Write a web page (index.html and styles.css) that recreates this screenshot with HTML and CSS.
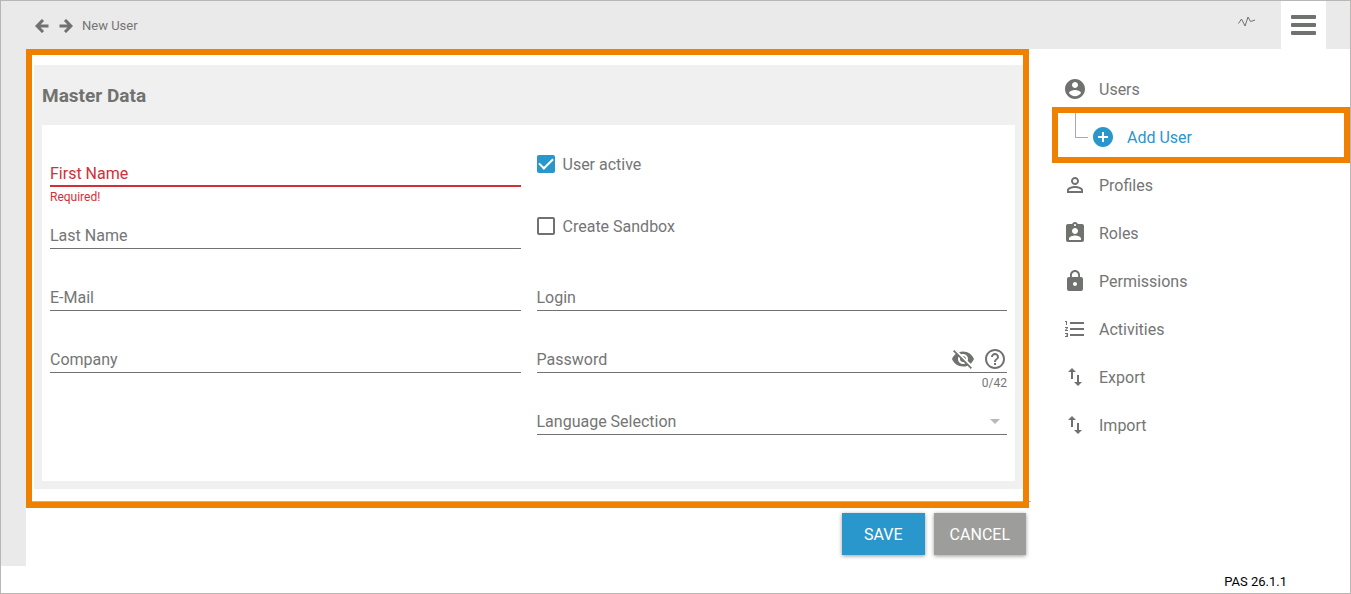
FILE: index.html
```html
<!DOCTYPE html>
<html lang="en">
<head>
<meta charset="utf-8">
<meta name="viewport" content="width=device-width, initial-scale=1">
<title>New User</title>
<link rel="stylesheet" href="styles.css">
</head>
<body class="app">
<header class="topbar">
  <button class="icon-button" type="button" aria-label="Back"><svg width="14" height="14" viewBox="0 0 14 14"><path d="M8 1 2 7l6 6M2.500 7H13.500" fill="none" stroke="currentColor" stroke-width="3"/></svg></button>
  <button class="icon-button forward" type="button" aria-label="Forward"><svg width="14" height="14" viewBox="0 0 14 14"><path d="M6 1 12 7l-6 6M11.500 7H.5" fill="none" stroke="currentColor" stroke-width="3"/></svg></button>
  <span class="crumb">New User</span>
  <button class="icon-button pulse" type="button" aria-label="Activity"><svg width="18" height="12" viewBox="0 0 18 12"><path d="M.5 7.500 3.500 3 7 10 10 1l2.500 4.500L17 4" fill="none" stroke="currentColor" stroke-width="1"/></svg></button>
  <button class="menu-button" type="button" aria-label="Menu"><svg width="25" height="22" viewBox="0 0 25 22"><g fill="currentColor"><rect width="25" height="4" y="1" rx="1"/><rect width="25" height="4" y="9" rx="1"/><rect width="25" height="4" y="17" rx="1"/></g></svg></button>
</header>
<div class="workspace">
  <div class="rail"></div>
  <main class="content">
    <form class="user-form">
      <div class="highlight">
        <section class="panel">
          <h1 class="panel-title">Master Data</h1>
          <div class="fields">
            <div class="field invalid">
              <label for="first">First Name</label>
              <input id="first" type="text" aria-describedby="first-hint">
              <span class="hint" id="first-hint">Required!</span>
            </div>
            <div class="check"><input id="active" type="checkbox" checked><label for="active">User active</label></div>
            <div class="field"><label for="last">Last Name</label><input id="last" type="text"></div>
            <div class="check"><input id="sandbox" type="checkbox"><label for="sandbox">Create Sandbox</label></div>
            <div class="field"><label for="mail">E-Mail</label><input id="mail" type="email"></div>
            <div class="field"><label for="login">Login</label><input id="login" type="text"></div>
            <div class="field"><label for="company">Company</label><input id="company" type="text"></div>
            <div class="field">
              <label for="password">Password</label>
              <input id="password" type="password" maxlength="42">
              <div class="field-icons">
                <button class="icon-button" type="button" aria-label="Show password"><svg width="24" height="24" viewBox="0 0 24 24"><path fill="currentColor" d="M12 7c2.760 0 5 2.240 5 5 0 .650-.130 1.260-.360 1.830l2.920 2.920c1.510-1.260 2.700-2.890 3.430-4.750-1.730-4.390-6-7.500-11-7.500-1.400 0-2.740.250-3.980.700l2.160 2.160C10.740 7.130 11.350 7 12 7zM2 4.270l2.280 2.280.460.460C3.080 8.300 1.780 10.020 1 12c1.730 4.390 6 7.500 11 7.500 1.550 0 3.030-.300 4.380-.840l.420.420L19.730 22 21 20.730 3.270 3 2 4.270zM7.530 9.800l1.550 1.550c-.050.210-.080.430-.080.650 0 1.660 1.340 3 3 3 .220 0 .440-.030.650-.080l1.550 1.550c-.670.330-1.410.530-2.200.530-2.760 0-5-2.240-5-5 0-.790.200-1.530.530-2.200zm4.310-.780 3.150 3.150.020-.160c0-1.660-1.340-3-3-3l-.170.010z"/></svg></button>
                <button class="icon-button" type="button" aria-label="Password help"><svg width="24" height="24" viewBox="0 0 24 24"><path fill="currentColor" d="M11 18h2v-2h-2v2zm1-16C6.480 2 2 6.480 2 12s4.480 10 10 10 10-4.480 10-10S17.520 2 12 2zm0 18c-4.410 0-8-3.590-8-8s3.590-8 8-8 8 3.590 8 8-3.590 8-8 8zm0-14c-2.210 0-4 1.790-4 4h2c0-1.100.900-2 2-2s2 .900 2 2c0 2-3 1.750-3 5h2c0-2.250 3-2.500 3-5 0-2.210-1.790-4-4-4z"/></svg></button>
              </div>
              <span class="hint counter">0/42</span>
            </div>
            <div class="field language">
              <label for="language">Language Selection</label>
              <select id="language"><option value="" label=" "></option><option>English</option><option>Deutsch</option></select>
              <svg class="caret" width="10" height="5" viewBox="0 0 10 5"><path fill="currentColor" d="M0 0h10L5 5z"/></svg>
            </div>
          </div>
        </section>
        <hr class="divider">
      </div>
      <div class="actions">
        <button class="action save" type="submit">SAVE</button>
        <button class="action cancel" type="button">CANCEL</button>
      </div>
    </form>
  </main>
  <nav class="sidebar" aria-label="User administration">
    <a class="item" href="#users"><svg width="24" height="24" viewBox="0 0 24 24"><path fill="currentColor" d="M12 2C6.480 2 2 6.480 2 12s4.480 10 10 10 10-4.480 10-10S17.520 2 12 2zm0 3c1.660 0 3 1.340 3 3s-1.340 3-3 3-3-1.340-3-3 1.340-3 3-3zm0 14.200c-2.500 0-4.710-1.280-6-3.220.030-1.990 4-3.080 6-3.080 1.990 0 5.970 1.090 6 3.080-1.290 1.940-3.500 3.220-6 3.220z"/></svg>Users</a>
    <a class="item sub" href="#add" aria-current="page"><svg width="24" height="24" viewBox="0 0 24 24"><path fill="currentColor" d="M12 2C6.480 2 2 6.480 2 12s4.480 10 10 10 10-4.480 10-10S17.520 2 12 2zm5 11h-4v4h-2v-4H7v-2h4V7h2v4h4v2z"/></svg>Add User</a>
    <a class="item" href="#profiles"><svg width="24" height="24" viewBox="0 0 24 24"><path fill="currentColor" d="M12 5.900a2.100 2.100 0 1 1 0 4.200 2.100 2.100 0 0 1 0-4.200m0 9c2.970 0 6.100 1.460 6.100 2.100v1.100H5.900V17c0-.640 3.130-2.100 6.100-2.100M12 4C9.790 4 8 5.790 8 8s1.790 4 4 4 4-1.790 4-4-1.790-4-4-4zm0 9c-2.670 0-8 1.340-8 4v3h16v-3c0-2.660-5.330-4-8-4z"/></svg>Profiles</a>
    <a class="item" href="#roles"><svg width="24" height="24" viewBox="0 0 24 24"><path fill="currentColor" d="M19 3h-4.180C14.400 1.840 13.300 1 12 1s-2.400.840-2.820 2H5c-1.100 0-2 .900-2 2v14c0 1.100.900 2 2 2h14c1.100 0 2-.900 2-2V5c0-1.100-.900-2-2-2zm-7 0c.550 0 1 .450 1 1s-.450 1-1 1-1-.450-1-1 .450-1 1-1zm0 4c1.660 0 3 1.340 3 3s-1.340 3-3 3-3-1.340-3-3 1.340-3 3-3zm6 12H6v-1.400c0-2 4-3.100 6-3.100s6 1.100 6 3.100V19z"/></svg>Roles</a>
    <a class="item" href="#permissions"><svg width="24" height="24" viewBox="0 0 24 24"><path fill="currentColor" d="M18 8h-1V6c0-2.760-2.240-5-5-5S7 3.240 7 6v2H6c-1.100 0-2 .900-2 2v10c0 1.100.900 2 2 2h12c1.100 0 2-.900 2-2V10c0-1.100-.900-2-2-2zm-6 9c-1.100 0-2-.900-2-2s.900-2 2-2 2 .900 2 2-.900 2-2 2zm3.100-9H8.900V6c0-1.710 1.390-3.100 3.100-3.100s3.100 1.390 3.100 3.100v2z"/></svg>Permissions</a>
    <a class="item" href="#activities"><svg width="24" height="24" viewBox="0 0 24 24"><path fill="currentColor" d="M2 17h2v.500H3v1h1v.500H2v1h3v-4H2v1zm1-9h1V4H2v1h1v3zm-1 3h1.800L2 13.100v.900h3v-1H3.200L5 10.900V10H2v1zm5-6v2h14V5H7zm0 14h14v-2H7v2zm0-6h14v-2H7v2z"/></svg>Activities</a>
    <a class="item" href="#export"><svg width="24" height="24" viewBox="0 0 24 24"><path fill="currentColor" d="M16 17.010V10h-2v7.010h-3L15 21l4-3.990h-3zM9 3 5 6.990h3V14h2V6.990h3L9 3z"/></svg>Export</a>
    <a class="item" href="#import"><svg width="24" height="24" viewBox="0 0 24 24"><path fill="currentColor" d="M16 17.010V10h-2v7.010h-3L15 21l4-3.990h-3zM9 3 5 6.990h3V14h2V6.990h3L9 3z"/></svg>Import</a>
  </nav>
</div>
<footer class="version">PAS 26.1.1</footer>
</body>
</html>
```
FILE: styles.css
```css
* { box-sizing: border-box; }

.app {
  --gray: #70726f;
  --text: #757575;
  --blue: #2996cc;
  --red: #d32f37;
  --orange: #f08000;
  display: flex;
  flex-direction: column;
  min-height: 100vh;
  margin: 0;
  border: 1px solid #bab6b6;
  background: #fff;
  color: var(--text);
  font: 16px/24px Roboto, "Liberation Sans", sans-serif;
}

svg { display: block; flex: none; }

button, input, select { font: inherit; }

.icon-button {
  padding: 0;
  border: 0;
  background: none;
  color: var(--gray);
  cursor: pointer;
}

.topbar {
  display: flex;
  align-items: center;
  height: 48px;
  padding: 2px 24px 0 34px;
  background: #eaeaea;
}

.forward { margin-left: 10px; }
.crumb { margin-left: 9px; font-size: 13px; }
.pulse { margin: 0 25px 8px auto; }

.menu-button {
  display: flex;
  align-items: center;
  justify-content: center;
  align-self: stretch;
  width: 45px;
  margin-top: -2px;
  padding: 0;
  border: 0;
  background: #fff;
  color: var(--gray);
}

.workspace {
  display: grid;
  flex: 1;
  grid-template-columns: 25px minmax(0, 1fr) 321px;
}

.rail { background: #eaeaea; }
.content { isolation: isolate; }

.highlight {
  padding: 10px 0 0 2px;
  border: 6px solid var(--orange);
}

.panel {
  padding: 0 8px 8px;
  background: #f0f0f0;
}

.panel-title {
  height: 60px;
  margin: 0;
  color: var(--gray);
  font-size: 19px;
  font-weight: 700;
  line-height: 62px;
}

.fields {
  display: grid;
  grid-template-columns: repeat(2, minmax(0, 1fr));
  grid-auto-rows: 62px;
  column-gap: 16px;
  padding: 20px 8px 26px;
  background: #fff;
}

.field {
  display: grid;
  grid-template: 30px 20px / minmax(0, 1fr) auto;
  padding-top: 12px;
}

.field label {
  z-index: 1;
  grid-area: 1 / 1;
  line-height: 34px;
  pointer-events: none;
}

.field input,
.field select {
  grid-area: 1 / 1 / 2 / 3;
  width: 100%;
  padding: 0;
  border: 0;
  border-bottom: 1px solid var(--gray);
  border-radius: 0;
  outline: 0;
  background: none;
  color: inherit;
  appearance: none;
}

.invalid { color: var(--red); }
.field.invalid input { border-bottom: 2px solid var(--red); }

.hint {
  grid-area: 2 / 1 / 3 / 3;
  font-size: 12px;
  line-height: 20px;
}

.counter { justify-self: end; }

.field-icons {
  z-index: 1;
  display: flex;
  grid-area: 1 / 2;
  align-items: center;
  gap: 8px;
  padding-top: 2px;
}

.language { grid-column: 2; }

.caret {
  grid-area: 1 / 2;
  align-self: center;
  margin: 2px 7px 0 0;
  color: #b8b8b8;
  pointer-events: none;
}

.check {
  display: flex;
  align-items: flex-start;
  gap: 8px;
  padding-top: 7px;
}

.check label { line-height: 26px; }

.check input {
  display: grid;
  width: 18px;
  height: 18px;
  margin: 3px 0;
  border: 2px solid var(--gray);
  border-radius: 2px;
  place-content: center;
  appearance: none;
}

.check input:checked {
  border-color: var(--blue);
  background: var(--blue);
}

.check input:checked::before {
  width: 6px;
  height: 12px;
  margin-bottom: 5px;
  border: solid #fff;
  border-width: 0 2px 2px 0;
  content: "";
  transform: rotate(45deg);
}

/* Runs slightly past the form, beneath its frame. */
.divider {
  position: relative;
  z-index: -1;
  height: 1px;
  margin: 12px -8px 0 -2px;
  border: 0;
  background: #b5b5b5;
}

.actions {
  display: flex;
  justify-content: flex-end;
  gap: 9px;
  padding: 5px 3px 10px;
}

.action {
  height: 42px;
  padding: 2px 16px 0;
  border: 0;
  box-shadow: 0 1px 4px rgb(0 0 0 / 40%);
  color: #fff;
}

.save { padding: 2px 22px 0; background: var(--blue); }
.cancel { background: #9d9d9b; }

.sidebar { padding: 16px 0 0 34px; }

.item {
  position: relative;
  display: flex;
  align-items: center;
  gap: 12px;
  height: 48px;
  padding-top: 2px;
  color: inherit;
  text-decoration: none;
}

.item svg { margin-bottom: 2px; color: var(--gray); }

.sub { padding-left: 28px; color: var(--blue); }
.sub svg { color: var(--blue); }

.sub::before {
  position: absolute;
  top: 0;
  left: 12px;
  width: 12px;
  height: 24px;
  border: solid #aaa;
  border-width: 0 0 1px 1px;
  content: "";
}

.sub::after {
  position: absolute;
  inset: -6px 0 -2px -11px;
  border: 6px solid var(--orange);
  content: "";
}

.version {
  height: 27px;
  padding: 4px 63px 0;
  color: #000;
  font-size: 13px;
  line-height: 23px;
  text-align: right;
}
```
